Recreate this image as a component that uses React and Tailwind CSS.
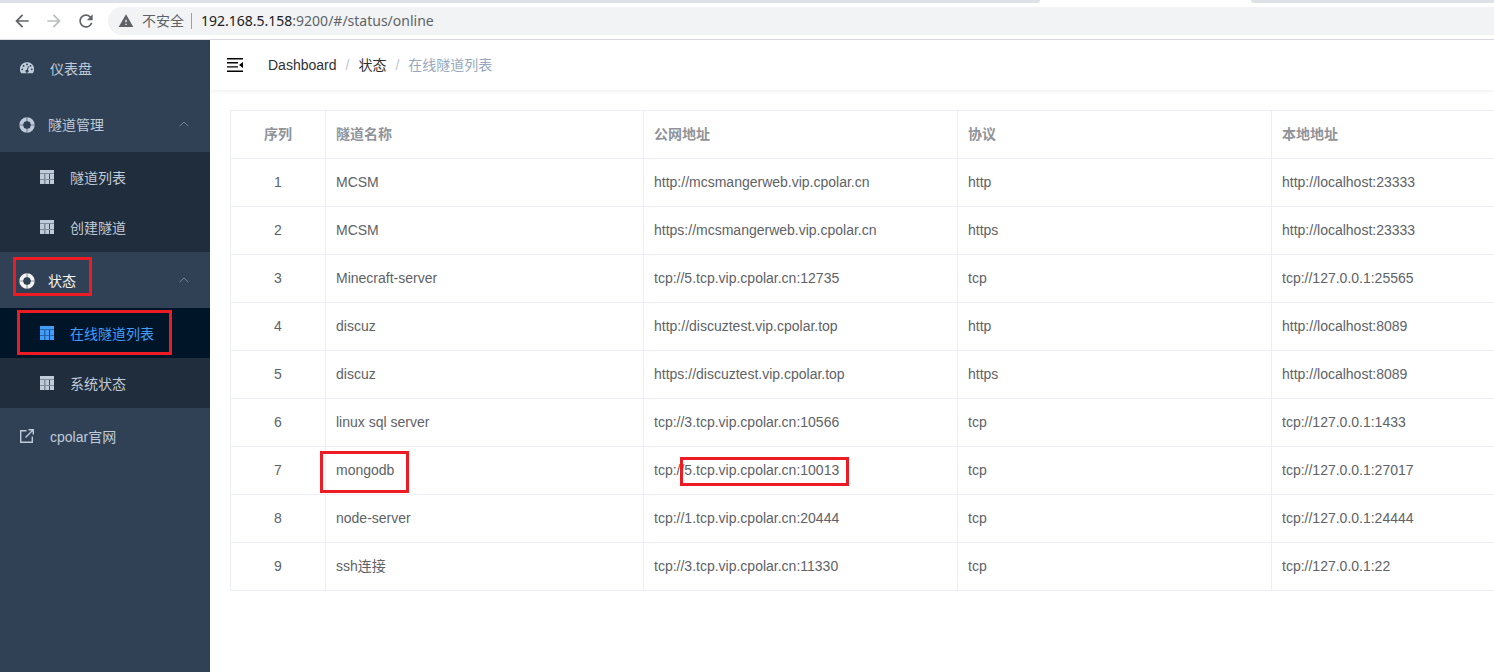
import React from 'react';
import clsx from 'clsx';
import { MdArrowBack, MdArrowForward, MdRefresh, MdWarning } from 'react-icons/md';

const tunnels = [
  { name: 'MCSM', address: 'http://mcsmangerweb.vip.cpolar.cn', protocol: 'http', local: 'http://localhost:23333' },
  { name: 'MCSM', address: 'https://mcsmangerweb.vip.cpolar.cn', protocol: 'https', local: 'http://localhost:23333' },
  { name: 'Minecraft-server', address: 'tcp://5.tcp.vip.cpolar.cn:12735', protocol: 'tcp', local: 'tcp://127.0.0.1:25565' },
  { name: 'discuz', address: 'http://discuztest.vip.cpolar.top', protocol: 'http', local: 'http://localhost:8089' },
  { name: 'discuz', address: 'https://discuztest.vip.cpolar.top', protocol: 'https', local: 'http://localhost:8089' },
  { name: 'linux sql server', address: 'tcp://3.tcp.vip.cpolar.cn:10566', protocol: 'tcp', local: 'tcp://127.0.0.1:1433' },
  { name: 'mongodb', address: 'tcp://5.tcp.vip.cpolar.cn:10013', protocol: 'tcp', local: 'tcp://127.0.0.1:27017', marked: true },
  { name: 'node-server', address: 'tcp://1.tcp.vip.cpolar.cn:20444', protocol: 'tcp', local: 'tcp://127.0.0.1:24444' },
  { name: 'ssh连接', address: 'tcp://3.tcp.vip.cpolar.cn:11330', protocol: 'tcp', local: 'tcp://127.0.0.1:22' },
];

function DashboardIcon() {
  return (
    <svg viewBox="0 0 14 14" className="w-[14px] h-[14px] shrink-0" fill="currentColor">
      <path
        fillRule="evenodd"
        d="M7 1.2a7 7 0 0 0-6 10.8c.1.2.3.3.5.3h11c.2 0 .4-.1.5-.3A7 7 0 0 0 7 1.2zM2.2 7.4a.9.9 0 1 1 0 1.8.9.9 0 0 1 0-1.8zM3.6 4a.9.9 0 1 1 0 1.8.9.9 0 0 1 0-1.8zM7 2.5a.9.9 0 1 1 0 1.8.9.9 0 0 1 0-1.8zM8 5.1l.9.3-1 3.6a1.5 1.5 0 1 1-.9-.3zM10.5 4a.9.9 0 1 1 0 1.8.9.9 0 0 1 0-1.8zM11.8 7.4a.9.9 0 1 1 0 1.8.9.9 0 0 1 0-1.8z"
      />
    </svg>
  );
}

function RingIcon() {
  return (
    <svg viewBox="0 0 16 16" className="w-4 h-4 shrink-0">
      <path fill="currentColor" fillRule="evenodd" d="M8 .3a7.7 7.7 0 1 0 0 15.4A7.7 7.7 0 0 0 8 .3zM8 4l2.9 1.1L12 8l-1.1 2.9L8 12l-2.9-1.1L4 8l1.1-2.9z" />
      <path d="M8 .3v4M8 11.7v4M.3 8h4M11.7 8h4" stroke="#304156" strokeWidth="1.2" strokeOpacity=".5" />
    </svg>
  );
}

function TableIcon() {
  return (
    <svg viewBox="0 0 14 14" className="w-[14px] h-[14px] shrink-0" fill="currentColor">
      <path d="M0 0h14v3H0zM0 4h4.6v5H0zM5.2 4h3.8v5H5.2zM9.8 4H14v5H9.8zM0 10h4.6v4H0zM5.2 10h3.8v4H5.2zM9.8 10H14v4H9.8z" />
      <path d="M0 3h14v1H0zM0 9h14v1H0z" opacity=".6" />
    </svg>
  );
}

function ExternalIcon() {
  return (
    <svg viewBox="0 0 14 14" className="w-[14px] h-[14px] shrink-0" fill="none" stroke="currentColor" strokeWidth="1.4">
      <path d="M6.5 1.7H.7v11.6h11.6V7.5M5.5 8.5l7-7M8.5.8h4.8v4.8" />
    </svg>
  );
}

function CollapseIcon() {
  return (
    <svg viewBox="0 0 16 14" className="w-4 h-[14px]" fill="currentColor">
      <path d="M0 0h16v1.4H0zM0 4.1h11v1.4H0zM0 8.2h11v1.4H0zM0 12.4h16v1.6H0zM16 4v6l-4-3z" />
    </svg>
  );
}

// red frame laid over the thing it points at
function Mark({ className }) {
  return <span className={clsx('absolute border-3 border-[#ed1c24] pointer-events-none', className)} />;
}

function BrowserBar() {
  return (
    <div className="bg-white border-b border-[#dadce0]">
      <div className="flex h-[3px] bg-white">
        <div className="w-[1040px] bg-[#dee1e6] rounded-br-lg"></div>
        <div className="w-[211px]"></div>
        <div className="flex-1 bg-[#dee1e6] rounded-bl-lg"></div>
      </div>
      <div className="flex items-center h-9 pl-3 text-[#5f6368]">
        <button aria-label="Back"><MdArrowBack className="w-5 h-5" /></button>
        <button aria-label="Forward" className="ml-3 text-[#babcbe]"><MdArrowForward className="w-5 h-5" /></button>
        <button aria-label="Reload" className="ml-3"><MdRefresh className="w-5 h-5" /></button>
        <div className="flex flex-1 items-center h-7 ml-3 pl-2.5 bg-[#f1f3f4] rounded-l-full text-sm whitespace-nowrap">
          <MdWarning className="w-4 h-4" />
          <span className="ml-2">不安全</span>
          <span className="w-px h-4 ml-[7px] bg-[#9aa0a6]"></span>
          <span className="ml-[9px] font-['Noto_Sans','Noto_Sans_CJK_SC',sans-serif]">
            <span className="text-[#202124]">192.168.5.158</span>:9200/#/status/online
          </span>
        </div>
      </div>
    </div>
  );
}

function Group({ label, active, children }) {
  return (
    <li>
      <button className={clsx('relative flex items-center w-full h-14 pt-0.5 pl-[19px] pr-[21px] text-left', active && 'text-[#f4f4f5]')}>
        <RingIcon />
        <span className="ml-[13px]">{label}</span>
        <svg viewBox="0 0 10 8" className="w-[10px] h-2 ml-auto text-[#77818d]" fill="none" stroke="currentColor">
          <path d="M.6 5.2 5 1l4.4 4.2" />
        </svg>
        {active && <Mark className="left-[13px] top-[5px] w-[79px] h-[39px]" />}
      </button>
      <ul className="bg-[#1f2d3d]">{children}</ul>
    </li>
  );
}

function SubItem({ label, active }) {
  return (
    <li>
      <a href="#" className={clsx('relative flex items-center h-[50px] pl-10', active && 'bg-[#001528] text-[#409eff]')}>
        <TableIcon />
        <span className="ml-4 pt-0.5">{label}</span>
        {active && <Mark className="left-[17px] top-[2px] w-[155px] h-[45px]" />}
      </a>
    </li>
  );
}

function Sidebar() {
  return (
    <nav className="w-[210px] shrink-0 bg-[#304156] text-[#bfcbd9]">
      <ul>
        <li>
          <a href="#" className="flex items-center h-14 pl-5">
            <DashboardIcon />
            <span className="ml-4 pt-0.5">仪表盘</span>
          </a>
        </li>
        <Group label="隧道管理">
          <SubItem label="隧道列表" />
          <SubItem label="创建隧道" />
        </Group>
        <Group label="状态" active>
          <SubItem label="在线隧道列表" active />
          <SubItem label="系统状态" />
        </Group>
        <li>
          <a href="#" className="flex items-center h-14 pl-5">
            <ExternalIcon />
            <span className="ml-4 pt-0.5">cpolar官网</span>
          </a>
        </li>
      </ul>
    </nav>
  );
}

function TopBar() {
  return (
    <header className="flex items-center h-[50px] pl-[17px] bg-white shadow-[0_1px_4px_rgba(0,21,41,0.08)]">
      <button aria-label="Collapse menu" className="text-black"><CollapseIcon /></button>
      <nav className="flex items-center ml-[25px] text-[#303133]">
        <a href="#">Dashboard</a>
        <span className="mx-[9px] text-[#c0c4cc]">/</span>
        <a href="#">状态</a>
        <span className="mx-[9px] text-[#c0c4cc]">/</span>
        <span className="text-[#97a8be]">在线隧道列表</span>
      </nav>
    </header>
  );
}

function TunnelTable() {
  const cell = 'h-12 px-2.5 pb-0.5 border border-[#ebeef5]';
  return (
    <table className="w-full min-w-[1264px] table-fixed border-collapse text-[#606266]">
      <colgroup>
        <col className="w-[95px]" />
        <col className="w-[318px]" />
        <col className="w-[314px]" />
        <col className="w-[314px]" />
        <col />
      </colgroup>
      <thead>
        <tr className="text-left text-[#909399]">
          <th className={clsx(cell, 'text-center')}>序列</th>
          <th className={cell}>隧道名称</th>
          <th className={cell}>公网地址</th>
          <th className={cell}>协议</th>
          <th className={clsx(cell, 'border-r-0')}>本地地址</th>
        </tr>
      </thead>
      <tbody>
        {tunnels.map((item, index) => (
          <tr key={index}>
            <td className={clsx(cell, 'text-center')}>{index + 1}</td>
            <td className={clsx(cell, 'relative')}>
              {item.name}
              {item.marked && <Mark className="-left-1.5 top-1 w-[89px] h-[42px]" />}
            </td>
            <td className={clsx(cell, 'relative')}>
              {item.address}
              {item.marked && <Mark className="left-9 top-2.5 w-[169px] h-[29px]" />}
            </td>
            <td className={cell}>{item.protocol}</td>
            <td className={clsx(cell, 'border-r-0')}>{item.local}</td>
          </tr>
        ))}
      </tbody>
    </table>
  );
}

export default function App() {
  return (
    <div className="flex flex-col min-h-screen bg-white font-['Liberation_Sans','Noto_Sans_CJK_SC',sans-serif] text-sm">
      <BrowserBar />
      <div className="flex flex-1">
        <Sidebar />
        <div className="flex-1 min-w-0">
          <TopBar />
          <main className="pl-5 pt-5 overflow-hidden">
            <TunnelTable />
          </main>
        </div>
      </div>
    </div>
  );
}
